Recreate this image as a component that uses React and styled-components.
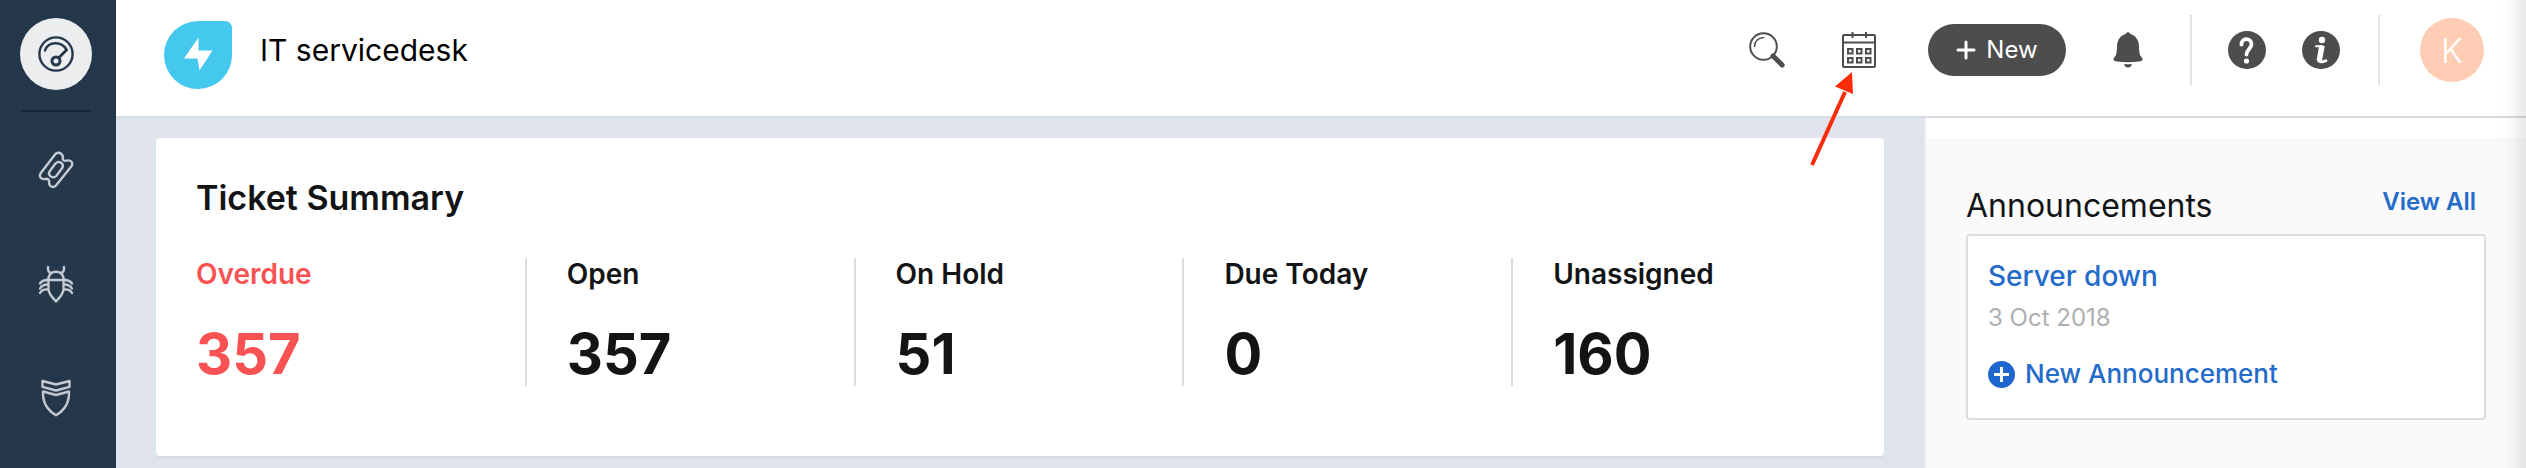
import React from 'react'
import styled, { createGlobalStyle } from 'styled-components'

const GlobalStyle = createGlobalStyle`
  * { box-sizing: border-box; }
  body {
    margin: 0;
    color: #121416;
    background: #dfe4ec;
    font-family: Inter, "Liberation Sans", sans-serif;
  }
  h1, h2, p, dl, dt, dd { margin: 0; }
  a { text-decoration: none; }
  svg { display: block; }
`;

const Page = styled.div`
  display: flex;
  min-height: 100vh;
`;

const Sidebar = styled.nav`
  flex: 0 0 116px;
  display: flex;
  flex-direction: column;
  align-items: center;
  padding: 18px 4px 0 0;
  background: #25374b;
`;

const NavLink = styled.a`
  display: flex;
  align-items: center;
  justify-content: center;
  width: 72px;
  height: 72px;
  margin-bottom: ${props => props.$active ? "20px" : "42px"};
  border-radius: 50%;
  color: ${props => props.$active ? "#25374b" : "#c3cad3"};
  background: ${props => props.$active ? "#ebedef" : "transparent"};
`;

const NavDivider = styled.hr`
  width: 70px;
  height: 2px;
  margin: 0 0 22px;
  border: 0;
  background: #162331;
`;

const Content = styled.div`
  flex: 1;
  min-width: 0;
  display: flex;
  flex-direction: column;
`;

const Header = styled.header`
  display: flex;
  align-items: center;
  padding: 11px 42px 27px 48px;
  border-bottom: 2px solid #d6dce1;
  background: #fff;
`;

const Logo = styled.a`
  margin-top: 10px;
`;

const Title = styled.h1`
  flex: 1;
  margin-left: 28px;
  color: #000;
  font-size: 30px;
  font-weight: 400;
  line-height: 40px;
`;

const Tools = styled.div`
  display: flex;
  align-items: center;
  gap: ${props => props.$gap};
  margin-right: ${props => props.$space};
`;

const IconButton = styled.button`
  display: flex;
  align-items: center;
  justify-content: center;
  width: ${props => props.$width || "40px"};
  height: 40px;
  padding: 0;
  border: 0;
  color: #4d4d4d;
  background: none;
`;

const CalendarSlot = styled.div`
  position: relative;
`;

const Pointer = styled.svg`
  position: absolute;
  top: 38px;
  right: 26px;
  z-index: 2;
  pointer-events: none;
`;

const NewButton = styled.button`
  display: flex;
  align-items: center;
  justify-content: center;
  gap: 10px;
  width: 138px;
  height: 52px;
  padding: 0;
  border: 0;
  border-radius: 26px;
  color: #fff;
  background: #4d4d4d;
  font-family: inherit;
  font-size: 24px;
  line-height: 32px;
`;

const Help = styled.div`
  display: flex;
  align-items: center;
  gap: 36px;
  height: 70px;
  padding: 0 38px 0 36px;
  border: solid #e2e2e2;
  border-width: 0 2px;
`;

const Avatar = styled.button`
  width: 64px;
  height: 64px;
  margin-left: 40px;
  padding: 0;
  border: 0;
  border-radius: 50%;
  color: #fff;
  background: #ffcdb4;
  font-family: inherit;
  font-size: 34px;
  font-weight: 300;
`;

const Body = styled.div`
  flex: 1;
  display: flex;
`;

const Main = styled.main`
  flex: 1;
  min-width: 0;
  padding: 20px 40px 12px;
`;

const Card = styled.section`
  padding: 40px 44px 70px 40px;
  border-radius: 4px;
  background: #fff;
  box-shadow: 0 2px 2px #d5dbe2;
`;

const CardTitle = styled.h2`
  margin-bottom: 40px;
  font-size: 34px;
  font-weight: 600;
  line-height: 40px;
`;

const Stats = styled.dl`
  display: grid;
  grid-template-columns: repeat(5, 1fr);
`;

const Stat = styled.div`
  color: ${props => props.$alert ? "#f85252" : "inherit"};

  & + & {
    padding-left: 40px;
    border-left: 2px solid #dadfe0;
  }
`;

const StatName = styled.dt`
  margin-bottom: 32px;
  font-size: 28px;
  font-weight: 600;
  line-height: 32px;
`;

const StatValue = styled.dd`
  font-size: 56px;
  font-weight: 700;
  line-height: 64px;
`;

const Aside = styled.aside`
  flex: 0 0 602px;
  display: flex;
  flex-direction: column;
  border-left: 2px solid #ebedf0;
  padding-top: 20px;
  background: #fff;
`;

const Panel = styled.section`
  flex: 1;
  padding: 48px 40px 40px;
  background: #fafafa;
`;

const PanelHead = styled.div`
  display: flex;
  align-items: flex-start;
  justify-content: space-between;
  margin-bottom: 8px;
  padding-right: 10px;
`;

const PanelTitle = styled.h2`
  font-size: 32px;
  font-weight: 400;
  line-height: 40px;
`;

const Link = styled.a`
  display: flex;
  align-items: center;
  gap: 10px;
  color: #256bc9;
  font-size: ${props => props.$size};
  font-weight: ${props => props.$strong ? 600 : 500};
  line-height: 32px;
`;

const Announcement = styled.div`
  padding: 24px 20px 28px;
  border: 2px solid #d9dee1;
  border-radius: 4px;
  background: #fff;
`;

const AnnouncementDate = styled.p`
  margin: 10px 0 24px;
  color: #adb0b3;
  font-size: 24px;
  line-height: 32px;
`;

// soft shade along the right edge of the window
const EdgeShade = styled.div`
  position: fixed;
  top: 0;
  right: 0;
  bottom: 0;
  width: 30px;
  pointer-events: none;
  background: linear-gradient(to right, rgba(0, 0, 0, 0), rgba(0, 0, 0, 0.02) 50%, rgba(0, 0, 0, 0.09));
`;

const DashboardIcon = () => (
  <svg width="36" height="36" viewBox="0 0 36 36" fill="none" stroke="currentColor" strokeWidth="2.4" strokeLinecap="round">
    <circle cx="18" cy="18" r="16.6" />
    <path d="M7 14.5C10 5.5 23 4.5 28.5 13.5" />
    <path d="M28.5 14L21.5 21" strokeWidth="2.8" />
    <circle cx="18" cy="25" r="4" strokeWidth="3" />
  </svg>
)

const TicketIcon = () => (
  <svg width="36" height="38" viewBox="0 0 36 38" fill="none" stroke="currentColor" strokeWidth="2.4" strokeLinejoin="round">
    <path d="M17.6 2.8Q20.500 .6 23.200 2.700Q25.600 5 24.700 8.200Q25.500 10.400 28.300 9.700Q32.300 8.500 34 11.400Q34.800 13.400 33.200 15.400L18 34.600Q15 37.200 12.200 34.800Q10.800 33 11.200 30.500Q11 28 8 27.800Q4.400 28.800 2.400 26.400Q1.200 24.400 2.800 22Z" />
    <path d="M17.5 12.500Q20 10 22.800 11.600Q26 13.600 24.400 16.700L18.200 25Q15.800 27.400 12.900 25.5Q9.800 23.300 11.500 20.500Z" />
  </svg>
)

const BugIcon = () => (
  <svg width="36" height="38" viewBox="0 0 36 38" fill="none" stroke="currentColor" strokeWidth="2.4" strokeLinecap="round">
    <path d="M10 2V4Q10.2 7.5 13 8M26 2V4Q25.8 7.5 23 8" />
    <path d="M10.5 15V12.5Q12 6.8 18 6.8Q24 6.8 25.5 12.5V15" />
    <path d="M8 15H28M10.5 15V25Q11.5 30 18 36.3Q24.5 30 25.5 25V15" />
    <path d="M10 15Q4.5 14.8 2 18.5M10 19.5Q4.5 19.3 2 23.5M10 24.5Q4.5 23.8 2 28" />
    <path d="M26 15Q31.5 14.8 34 18.5M26 19.5Q31.5 19.3 34 23.5M26 24.5Q31.5 23.8 34 28" />
  </svg>
)

const ShieldIcon = () => (
  <svg width="36" height="38" viewBox="0 0 36 38" fill="none" stroke="currentColor" strokeWidth="2.4" strokeLinejoin="round">
    <path d="M4.5 2L18 5.500L31.5 2V7.800L18 11.500L4.5 7.800Z" />
    <path d="M5 12.5L18 16L31 12.5C31.5 23 26 31.5 18 36.3C10 31.5 4.500 23 5 12.5Z" />
  </svg>
)

const LogoIcon = () => (
  <svg width="68" height="68" viewBox="0 0 68 68">
    <path d="M34 0H60Q68 0 68 8V33A34 34 0 1 1 34 0Z" fill="#45c8ed" />
    <path d="M34.5 16.5L20 37.5H33.5L35.5 49.5L48.5 29.5H34.5Z" fill="#fff" />
  </svg>
)

const SearchIcon = () => (
  <svg width="36" height="36" viewBox="0 0 36 36" fill="none" stroke="currentColor" strokeLinecap="round">
    <circle cx="14.5" cy="14.5" r="13.3" strokeWidth="2" />
    <path d="M5.5 14.5Q6 6.5 14.5 5.6" strokeWidth="1.5" />
    <path d="M24 24L33.2 33" strokeWidth="5" />
  </svg>
)

const CalendarIcon = () => (
  <svg width="34" height="36" viewBox="0 0 34 36" fill="none" stroke="currentColor" strokeWidth="2">
    <rect x="1" y="3" width="32" height="32" rx="1" />
    <path d="M1 10.5H33M10.5 0V6M24 0V6" />
    <path d="M6 17h4.500v4.500H6zM15 17h4.500v4.500H15zM24 17h4.500v4.500H24zM6 26h4.500v4.500H6zM15 26h4.500v4.500H15zM24 26h4.500v4.500H24z" />
  </svg>
)

const PlusIcon = () => (
  <svg width="20" height="20" viewBox="0 0 20 20" stroke="currentColor" strokeWidth="3" strokeLinecap="round">
    <path d="M10 2V18M2 10H18" />
  </svg>
)

const BellIcon = () => (
  <svg width="30" height="36" viewBox="0 0 30 36" fill="currentColor">
    <path d="M15 0Q16.6 .3 17.5 2C22.5 3.5 25.8 8 26 14C26.2 20 26.3 23.5 29.3 26Q30.3 28.5 27.5 29.2Q15 31.5 2.5 29.2Q-.3 28.5 .7 26C3.7 23.5 3.8 20 4 14C4.2 8 7.5 3.5 12.5 2Q13.4 .3 15 0Z" />
    <path d="M11 32Q15 32.6 19 32Q18 35.5 15 35.5Q12 35.5 11 32Z" />
  </svg>
)

const QuestionIcon = () => (
  <svg width="38" height="38" viewBox="0 0 38 38" fill="none">
    <circle cx="19" cy="19" r="19" fill="currentColor" />
    <path d="M13.5 13.5C13 6.5 23.5 6.5 23.5 13C23.5 17.5 18.5 18.5 18.5 23.5" stroke="#fff" strokeWidth="3.8" strokeLinecap="round" />
    <circle cx="18.5" cy="30" r="2.6" fill="#fff" />
  </svg>
)

const InfoIcon = () => (
  <svg width="38" height="38" viewBox="0 0 38 38" fill="none" stroke="#fff">
    <circle cx="19" cy="19" r="19" fill="currentColor" stroke="none" />
    <circle cx="20" cy="9" r="3.2" fill="#fff" stroke="none" />
    <path d="M14 15.3H20" strokeWidth="2" strokeLinecap="round" />
    <path d="M20 14.500L17.3 29.5" strokeWidth="5.5" />
    <path d="M16.5 29.8Q18 32 24 29.8" strokeWidth="2.8" strokeLinecap="round" />
  </svg>
)

const AddIcon = () => (
  <svg width="27" height="27" viewBox="0 0 27 27">
    <circle cx="13.5" cy="13.5" r="13.5" fill="#1f67cf" />
    <path d="M13.5 6V21M6 13.5H21" stroke="#fff" strokeWidth="3" />
  </svg>
)

const stats = [
  { name: "Overdue", value: 357, alert: true },
  { name: "Open", value: 357 },
  { name: "On Hold", value: 51 },
  { name: "Due Today", value: 0 },
  { name: "Unassigned", value: 160 },
];

const App = () => {
  return (
    <Page>
      <GlobalStyle />
      <Sidebar aria-label="Main">
        <NavLink href="#dashboard" aria-label="Dashboard" $active><DashboardIcon /></NavLink>
        <NavDivider />
        <NavLink href="#tickets" aria-label="Tickets"><TicketIcon /></NavLink>
        <NavLink href="#problems" aria-label="Problems"><BugIcon /></NavLink>
        <NavLink href="#changes" aria-label="Changes"><ShieldIcon /></NavLink>
      </Sidebar>
      <Content>
        <Header>
          <Logo href="#home" aria-label="Home"><LogoIcon /></Logo>
          <Title>IT servicedesk</Title>
          <Tools $gap="52px" $space="49px">
            <IconButton aria-label="Search"><SearchIcon /></IconButton>
            <CalendarSlot>
              <IconButton aria-label="Calendar"><CalendarIcon /></IconButton>
              <Pointer width="52" height="100" viewBox="0 0 52 100">
                <path d="M11 97L44 24" stroke="#fb2c0b" strokeWidth="4" />
                <path d="M51 4L34 18.5L52 26Z" fill="#fb2c0b" />
              </Pointer>
            </CalendarSlot>
          </Tools>
          <Tools $gap="42px" $space="42px">
            <NewButton><PlusIcon />New</NewButton>
            <IconButton aria-label="Notifications"><BellIcon /></IconButton>
          </Tools>
          <Help>
            <IconButton $width="38px" aria-label="Help"><QuestionIcon /></IconButton>
            <IconButton $width="38px" aria-label="Information"><InfoIcon /></IconButton>
          </Help>
          <Avatar>K</Avatar>
        </Header>
        <Body>
          <Main>
            <Card>
              <CardTitle>Ticket Summary</CardTitle>
              <Stats>
                {stats.map(stat => (
                  <Stat key={stat.name} $alert={stat.alert}>
                    <StatName>{stat.name}</StatName>
                    <StatValue>{stat.value}</StatValue>
                  </Stat>
                ))}
              </Stats>
            </Card>
          </Main>
          <Aside>
            <Panel>
              <PanelHead>
                <PanelTitle>Announcements</PanelTitle>
                <Link href="#announcements" $size="24px" $strong>View All</Link>
              </PanelHead>
              <Announcement>
                <Link href="#server-down" $size="28px">Server down</Link>
                <AnnouncementDate>3 Oct 2018</AnnouncementDate>
                <Link href="#new-announcement" $size="26px"><AddIcon />New Announcement</Link>
              </Announcement>
            </Panel>
          </Aside>
        </Body>
      </Content>
      <EdgeShade />
    </Page>
  )
}

export default App
